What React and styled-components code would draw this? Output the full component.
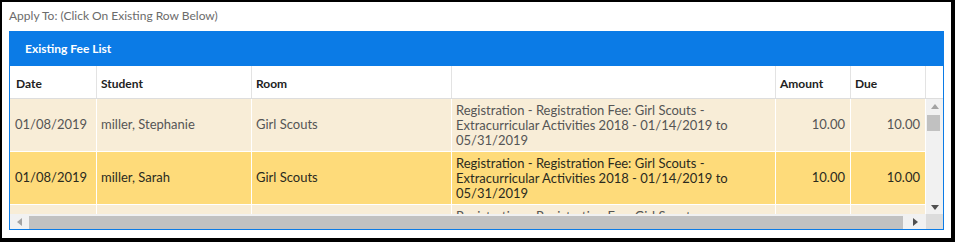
import React from 'react';
import styled, {createGlobalStyle} from 'styled-components';

const GlobalStyle = createGlobalStyle`
    html, body {
        margin: 0;
        padding: 0;
        background: #fff;
    }
    body {
        font-family: Lato, "Open Sans", Arial, sans-serif;
    }
`;

const BLUE = '#0b7be6';

const columns = [
    {key: 'date', title: 'Date', width: 87, pad: 6},
    {key: 'student', title: 'Student', width: 155},
    {key: 'room', title: 'Room', width: 200},
    {key: 'desc', title: '', width: 324},
    {key: 'amount', title: 'Amount', width: 75, right: true},
    {key: 'due', title: 'Due', width: 75, right: true},
];

const desc = 'Registration - Registration Fee: Girl Scouts - Extracurricular Activities 2018 - 01/14/2019 to 05/31/2019';

// third row is only peeking in under the scroll edge, its first line is all that shows
const rows = [
    {date: '01/08/2019', student: 'miller, Stephanie', room: 'Girl Scouts', desc, amount: '10.00', due: '10.00'},
    {date: '01/08/2019', student: 'miller, Sarah', room: 'Girl Scouts', desc, amount: '10.00', due: '10.00', selected: true},
    {desc: 'Registration - Registration Fee: Girl Scouts -'},
];

export default function App() {
    return (
        <Frame>
            <GlobalStyle />
            <Label>Apply To: (Click On Existing Row Below)</Label>
            <Panel>
                <Heading>Existing Fee List</Heading>
                <Grid>
                    <HeadRow>
                        {columns.map(c => (
                            <HeadCell key={c.key} $w={c.width} $pad={c.pad}>{c.title}</HeadCell>
                        ))}
                    </HeadRow>
                    <HeadCell $w={17} $last />
                    <Viewport>
                        {rows.map((r, i) => (
                            <Row key={i} $selected={r.selected}>
                                {columns.map(c => (
                                    <Cell key={c.key} $w={c.width} $pad={c.pad} $right={c.right} $top={c.key === 'desc'}>
                                        {r[c.key]}
                                    </Cell>
                                ))}
                            </Row>
                        ))}
                    </Viewport>
                    <VScroll>
                        <Arrow viewBox="0 0 8 5" $light><polygon points="0,5 8,5 4,0" /></Arrow>
                        <VThumb />
                        <Spacer />
                        <Arrow viewBox="0 0 8 5"><polygon points="0,0 8,0 4,5" /></Arrow>
                    </VScroll>
                    <HScroll>
                        <Arrow viewBox="0 0 5 8" $light $h><polygon points="5,0 5,8 0,4" /></Arrow>
                        <HThumb />
                        <Arrow viewBox="0 0 5 8" $h><polygon points="0,0 0,8 5,4" /></Arrow>
                    </HScroll>
                    <Corner />
                </Grid>
            </Panel>
        </Frame>
    );
}

const Frame = styled.div`
    box-sizing: border-box;
    width: 955px;
    height: 242px;
    border: 2px solid #000;
    border-right-width: 4px;
    border-bottom-width: 4px;
    padding: 5px 7px 0;
    overflow: hidden;
`;

const Label = styled.div`
    font-size: 12px;
    line-height: 18px;
    color: #6b6b6b;
    margin-bottom: 6px;
`;

const Panel = styled.div`
    border: 1px solid ${BLUE};
    display: flex;
    flex-direction: column;
`;

const Heading = styled.div`
    height: 34px;
    background: ${BLUE};
    color: #fff;
    font-weight: 700;
    font-size: 12px;
    line-height: 33px;
    padding-left: 15px;
`;

const Grid = styled.div`
    display: grid;
    grid-template-columns: 916px 17px;
    grid-template-rows: 33px 115px 15px;
`;

const HeadRow = styled.div`
    display: flex;
    background: #fff;
    border-bottom: 1px solid #ddd;
`;

const HeadCell = styled.div`
    box-sizing: border-box;
    width: ${p => p.$w}px;
    flex: none;
    padding: 2px 4px 0 ${p => p.$pad || 4}px;
    border-right: ${p => (p.$last ? 'none' : '1px solid #e3e3e3')};
    border-bottom: ${p => (p.$last ? '1px solid #ddd' : 'none')};
    font-size: 12px;
    font-weight: 700;
    color: #222;
    display: flex;
    align-items: center;
    background: #fff;
`;

const Viewport = styled.div`
    overflow: hidden;
`;

const Row = styled.div`
    display: flex;
    height: 53px;
    box-sizing: border-box;
    border-bottom: 1px solid #fff;
    background: ${p => (p.$selected ? '#fedb7a' : '#f8edd7')};
    color: ${p => (p.$selected ? '#2a2a1e' : '#555')};
`;

const Cell = styled.div`
    box-sizing: border-box;
    width: ${p => p.$w}px;
    flex: none;
    border-right: 1px solid #fff;
    padding: ${p => (p.$top ? '4px 4px 0' : `0 ${p.$right ? 5 : 4}px 1px ${p.$pad ? p.$pad - 1 : 4}px`)};
    font-size: 13px;
    line-height: 15px;
    display: flex;
    align-items: ${p => (p.$top ? 'flex-start' : 'center')};
    justify-content: ${p => (p.$right ? 'flex-end' : 'flex-start')};
`;

const VScroll = styled.div`
    background: #f1f1f1;
    display: flex;
    flex-direction: column;
    align-items: center;
    padding: 5px 0 4px;
    box-sizing: border-box;
`;

const Spacer = styled.div`
    flex: 1;
`;

const VThumb = styled.div`
    width: 13px;
    height: 16px;
    margin-top: 6px;
    margin-right: 3px;
    background: #c1c1c1;
`;

const Arrow = styled.svg`
    width: ${p => (p.$h ? 5 : 8)}px;
    height: ${p => (p.$h ? 8 : 5)}px;
    fill: ${p => (p.$light ? '#a3a3a3' : '#505050')};
    flex: none;
`;

const HScroll = styled.div`
    background: #f1f1f1;
    display: flex;
    align-items: center;
    padding: 0 8px 0 7px;
    gap: 7px;
`;

const HThumb = styled.div`
    flex: 1;
    height: 13px;
    margin-top: 1px;
    background: #c1c1c1;
    margin-right: 3px;
`;

const Corner = styled.div`
    background: #dcdcdc;
`;
